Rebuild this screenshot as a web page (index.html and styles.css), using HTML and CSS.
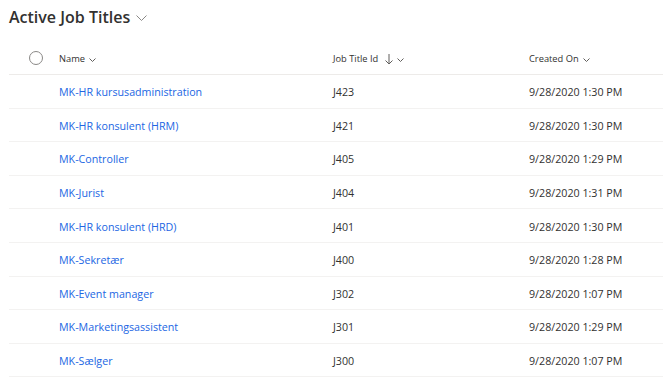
FILE: index.html
```html
<!DOCTYPE html>
<html lang="en">
<head>
  <meta charset="UTF-8" />
  <title>Active Job Titles</title>
  <link rel="stylesheet" href="styles.css">
</head>
<body>

  <div class="view-title">
    <span>Active Job Titles</span>
    <svg class="chev-lg" width="11" height="6" viewBox="0 0 11 6"><path d="M0.5 0.5 L5.5 5.5 L10.5 0.5" fill="none" stroke="#8a8886" stroke-width="1"/></svg>
  </div>

  <div class="grid">
    <div class="row head">
      <div class="cell check"><span class="circle"></span></div>
      <div class="cell">Name <svg class="chev" width="7" height="4" viewBox="0 0 7 4"><path d="M0.5 0.5 L3.5 3.5 L6.5 0.5" fill="none" stroke="#605e5c" stroke-width="1"/></svg></div>
      <div class="cell">Job Title Id <svg class="sort" width="8" height="11" viewBox="0 0 8 11"><path d="M4 0 V10 M0.5 6.5 L4 10 L7.5 6.5" fill="none" stroke="#605e5c" stroke-width="1"/></svg> <svg class="chev" width="7" height="4" viewBox="0 0 7 4"><path d="M0.5 0.5 L3.5 3.5 L6.5 0.5" fill="none" stroke="#605e5c" stroke-width="1"/></svg></div>
      <div class="cell">Created On <svg class="chev" width="7" height="4" viewBox="0 0 7 4"><path d="M0.5 0.5 L3.5 3.5 L6.5 0.5" fill="none" stroke="#605e5c" stroke-width="1"/></svg></div>
    </div>

    <div class="row">
      <div class="cell check"></div>
      <div class="cell"><a href="#">MK-HR kursusadministration</a></div>
      <div class="cell">J423</div>
      <div class="cell">9/28/2020 1:30 PM</div>
    </div>
    <div class="row">
      <div class="cell check"></div>
      <div class="cell"><a href="#">MK-HR konsulent (HRM)</a></div>
      <div class="cell">J421</div>
      <div class="cell">9/28/2020 1:30 PM</div>
    </div>
    <div class="row">
      <div class="cell check"></div>
      <div class="cell"><a href="#">MK-Controller</a></div>
      <div class="cell">J405</div>
      <div class="cell">9/28/2020 1:29 PM</div>
    </div>
    <div class="row">
      <div class="cell check"></div>
      <div class="cell"><a href="#">MK-Jurist</a></div>
      <div class="cell">J404</div>
      <div class="cell">9/28/2020 1:31 PM</div>
    </div>
    <div class="row">
      <div class="cell check"></div>
      <div class="cell"><a href="#">MK-HR konsulent (HRD)</a></div>
      <div class="cell">J401</div>
      <div class="cell">9/28/2020 1:30 PM</div>
    </div>
    <div class="row">
      <div class="cell check"></div>
      <div class="cell"><a href="#">MK-Sekretær</a></div>
      <div class="cell">J400</div>
      <div class="cell">9/28/2020 1:28 PM</div>
    </div>
    <div class="row">
      <div class="cell check"></div>
      <div class="cell"><a href="#">MK-Event manager</a></div>
      <div class="cell">J302</div>
      <div class="cell">9/28/2020 1:07 PM</div>
    </div>
    <div class="row">
      <div class="cell check"></div>
      <div class="cell"><a href="#">MK-Marketingsassistent</a></div>
      <div class="cell">J301</div>
      <div class="cell">9/28/2020 1:29 PM</div>
    </div>
    <div class="row">
      <div class="cell check"></div>
      <div class="cell"><a href="#">MK-Sælger</a></div>
      <div class="cell">J300</div>
      <div class="cell">9/28/2020 1:07 PM</div>
    </div>
  </div>

</body>
</html>
```

FILE: styles.css
```css
body {
  margin: 0;
  font-family: "Open Sans", "Noto Sans", sans-serif;
  color: #323130;
  background: #fff;
  overflow: hidden;
}
.view-title {
  display: flex;
  align-items: center;
  gap: 6px;
  height: 34px;
  padding-left: 9px;
  font-size: 16px;
  font-weight: 600;
}
.chev-lg {
  margin-top: 2px;
}
.grid {
  margin-left: 9px;
  margin-top: 7px;
}
.row {
  display: grid;
  grid-template-columns: 50px 274px 196px 1fr;
  align-items: center;
  height: 32.6px;
  border-bottom: 1px solid #f3f2f1;
  font-size: 10.7px;
}
.row.head {
  height: 33px;
  font-size: 9.3px;
  border-bottom: 1px solid #edebe9;
}
.cell {
  white-space: nowrap;
  padding-top: 2px;
}
.check {
  display: flex;
  justify-content: center;
  padding: 0 0 0 3px;
  box-sizing: border-box;
}
.circle {
  display: block;
  width: 14px;
  height: 14px;
  border: 1px solid #8a8886;
  border-radius: 50%;
  box-sizing: border-box;
}
.chev {
  margin-left: 2px;
  vertical-align: middle;
}
.sort {
  margin-left: 4px;
  vertical-align: middle;
}
a {
  color: #2266e3;
  text-decoration: none;
}
```
